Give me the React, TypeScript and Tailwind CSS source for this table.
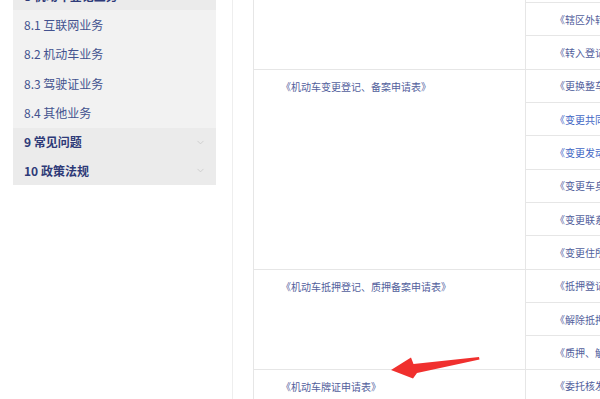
import { ChevronDown } from "lucide-react";

const font = { fontFamily: '"Noto Sans CJK SC", "Noto Sans", sans-serif' };

type Row = { text: string; bright?: boolean };
type Group = { title: string; rows: Row[] };

const groups: Group[] = [
  {
    title: "",
    rows: [
      { text: "" },
      { text: "《辖区外转入申请表》" },
      { text: "《转入登记申请表》" },
    ],
  },
  {
    title: "《机动车变更登记、备案申请表》",
    rows: [
      { text: "《更换整车申请表》" },
      { text: "《变更共同所有人申请表》", bright: true },
      { text: "《变更发动机申请表》", bright: true },
      { text: "《变更车身颜色申请表》" },
      { text: "《变更联系方式申请表》" },
      { text: "《变更住所申请表》" },
    ],
  },
  {
    title: "《机动车抵押登记、质押备案申请表》",
    rows: [
      { text: "《抵押登记申请表》" },
      { text: "《解除抵押申请表》" },
      { text: "《质押、解除质押申请表》" },
    ],
  },
  {
    title: "《机动车牌证申请表》",
    rows: [{ text: "《委托核发检验合格标志申请表》" }],
  },
];

const subItems = ["8.1 互联网业务", "8.2 机动车业务", "8.3 驾驶证业务", "8.4 其他业务"];

const Sidebar = () => (
  <div className="ml-[13px] w-[203px] shrink-0 self-start bg-[#f2f2f2]">
    <div className="mt-[-18.5px] flex h-[28.5px] items-center bg-[#ebebeb] pl-[11px] text-[12px] font-bold text-[#2e3a78]">
      8 机动车登记业务
    </div>
    {subItems.map((item) => (
      <div
        key={item}
        className="flex h-[29.5px] items-center pl-[11px] text-[12px] text-[#43528f]"
      >
        {item}
      </div>
    ))}
    {["9 常见问题", "10 政策法规"].map((item) => (
      <div
        key={item}
        className="flex h-[28.5px] items-center justify-between bg-[#ebebeb] pl-[11px] pr-[10px] text-[12px] font-bold text-[#2e3a78]"
      >
        <span>{item}</span>
        <ChevronDown size={11} strokeWidth={1.6} className="text-[#c6c6c6]" />
      </div>
    ))}
  </div>
);

const Arrow = () => (
  <svg
    className="pointer-events-none absolute left-0 top-0"
    width="600"
    height="399"
    viewBox="0 0 600 399"
  >
    <polygon
      points="391,370 411,357.5 413.5,364 479,357 479.5,359.5 417,373 413,378.5"
      fill="#f0302e"
    />
  </svg>
);

export default function App() {
  return (
    <div
      className="relative flex h-[399px] w-[600px] overflow-hidden bg-white"
      style={font}
    >
      <Sidebar />
      <div className="ml-[16px] flex h-full flex-col border-l border-[#eeeeee] pl-[20px]">
        <div className="mt-[-30.33px] w-[400px] border-l border-[#e6e6e6]">
          {groups.map((g, gi) => (
            <div key={gi} className="flex border-b border-[#e6e6e6]">
              <div className="w-[272px] shrink-0 border-r border-[#e6e6e6]">
                <div className="flex h-[33.33px] items-center pl-[27px] text-[10px] text-[#52609c]">
                  {g.title}
                </div>
              </div>
              <div className="flex-1">
                {g.rows.map((r, ri) => (
                  <div
                    key={ri}
                    className={`flex items-center whitespace-nowrap pl-[29px] text-[10px] ${
                      ri < g.rows.length - 1
                        ? "h-[33.33px] border-b border-[#e6e6e6]"
                        : "h-[32.33px]"
                    } ${r.bright ? "text-[#4266c4]" : "text-[#52609c]"}`}
                  >
                    {r.text}
                  </div>
                ))}
              </div>
            </div>
          ))}
        </div>
      </div>
      <Arrow />
    </div>
  );
}
